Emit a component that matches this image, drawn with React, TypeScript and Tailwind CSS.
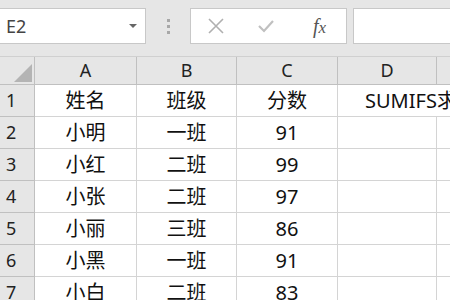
import React from "react";

const cols = [
  { w: 102, label: "A" },
  { w: 100, label: "B" },
  { w: 101, label: "C" },
  { w: 99, label: "D" },
  { w: 60, label: "E" },
];

const rows: string[][] = [
  ["姓名", "班级", "分数", ""],
  ["小明", "一班", "91", ""],
  ["小红", "二班", "99", ""],
  ["小张", "二班", "97", ""],
  ["小丽", "三班", "86", ""],
  ["小黑", "一班", "91", ""],
  ["小白", "二班", "83", ""],
];

const font = { fontFamily: '"Noto Sans", "Noto Sans CJK SC", sans-serif' };

export default function App() {
  return (
    <div className="w-[450px] h-[300px] overflow-hidden bg-[#e6e6e6] text-[#222]" style={font}>
      {/* toolbar */}
      <div className="flex h-[56px] pt-[8px] items-start">
        <div className="w-[146px] h-[36px] bg-white border border-[#c8c8c8] border-l-0 flex items-center justify-between pl-[6px] pr-[8px]">
          <span className="text-[18px] text-[#444]">E2</span>
          <span className="w-0 h-0 border-l-[4px] border-r-[4px] border-t-[4px] border-l-transparent border-r-transparent border-t-[#666]" />
        </div>
        <div className="w-[44px] h-[36px] flex flex-col items-center justify-center gap-[3px]">
          <span className="w-[3px] h-[3px] bg-[#a8a8a8]" />
          <span className="w-[3px] h-[3px] bg-[#a8a8a8]" />
          <span className="w-[3px] h-[3px] bg-[#a8a8a8]" />
        </div>
        <div className="w-[157px] h-[36px] bg-white border border-[#c8c8c8] flex items-center">
          <svg width="18" height="18" viewBox="0 0 18 18" className="ml-[16px]">
            <path d="M2 2 L16 16 M16 2 L2 16" stroke="#b0b0b0" strokeWidth="1.6" fill="none" />
          </svg>
          <svg width="18" height="14" viewBox="0 0 18 14" className="ml-[32px]">
            <path d="M2 7 L7 12 L16 2" stroke="#c0c0c0" strokeWidth="2.2" fill="none" />
          </svg>
          <span className="ml-[38px] text-[20px] italic text-[#555]" style={{ fontFamily: '"Liberation Serif", serif' }}>
            <i>f</i><span className="text-[17px]">x</span>
          </span>
        </div>
        <div className="w-[6px]" />
        <div className="flex-1 h-[36px] bg-white border border-[#c8c8c8] border-r-0" />
      </div>

      {/* grid */}
      <div className="flex flex-col">
        {/* column header */}
        <div className="flex h-[29px] bg-[#e6e6e6] border-t border-[#d0d0d0]">
          <div className="w-[35px] shrink-0 border-r border-b border-[#c0c0c0] relative">
            <svg width="18" height="18" viewBox="0 0 18 18" className="absolute right-[2px] bottom-[2px]">
              <polygon points="18,0 18,18 0,18" fill="#b4b4b4" />
            </svg>
          </div>
          {cols.map((c) => (
            <div
              key={c.label}
              style={{ width: c.w }}
              className="shrink-0 border-r border-b border-[#c0c0c0] flex items-center justify-center text-[18px] text-[#222]"
            >
              {c.label}
            </div>
          ))}
        </div>
        {rows.map((r, i) => (
          <div key={i} className="flex h-[32px]">
            <div className="w-[35px] shrink-0 bg-[#e6e6e6] border-r border-b border-[#c0c0c0] flex items-center pl-[6px] text-[18px] text-[#222]">
              {i + 1}
            </div>
            {cols.map((c, j) => (
              <div
                key={c.label}
                style={{ width: c.w }}
                className={`shrink-0 bg-white border-b border-[#d4d4d4] flex items-center justify-center text-[20px] text-[#111] ${
                  i === 0 && j === 3 ? "" : "border-r"
                } ${i === 0 && j === 3 ? "overflow-visible relative" : ""}`}
              >
                {i === 0 && j === 3 ? (
                  <span className="absolute left-[27px] whitespace-nowrap">SUMIFS求和</span>
                ) : (
                  r[j] ?? ""
                )}
              </div>
            ))}
          </div>
        ))}
      </div>
    </div>
  );
}
